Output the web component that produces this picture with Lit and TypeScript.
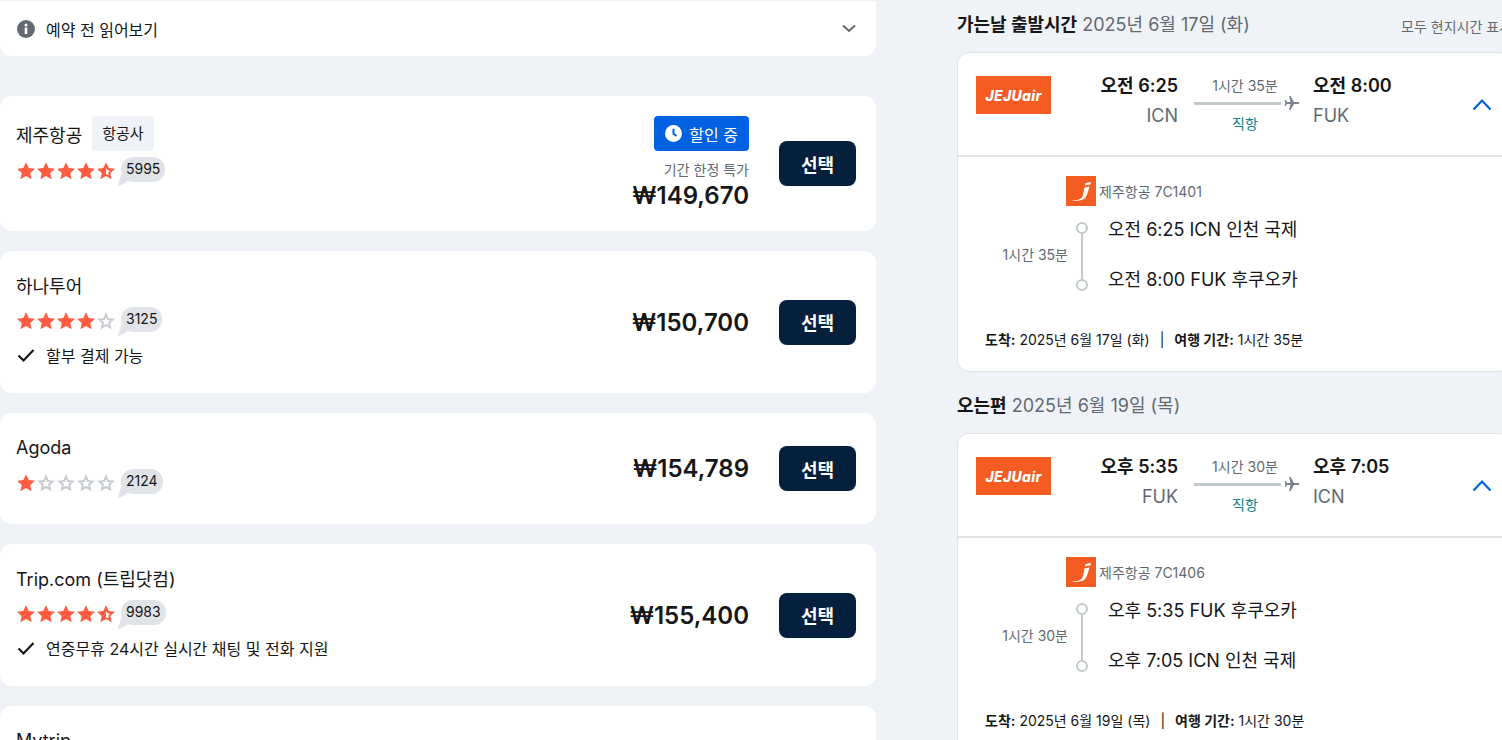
import { html, css, LitElement, svg } from "lit";
import { customElement } from "lit/decorators.js";

interface Offer {
  name: string;
  tag?: string;
  rating?: number;
  count?: string;
  perk?: string;
  price?: string;
  sale?: boolean;
}

interface Stop {
  time: string;
  code: string;
  place: string;
}

interface Leg {
  label: string;
  date: string;
  from: Stop;
  to: Stop;
  duration: string;
  flight: string;
}

const offers: Offer[] = [
  { name: "제주항공", tag: "항공사", rating: 4.5, count: "5995", price: "₩149,670", sale: true },
  { name: "하나투어", rating: 4, count: "3125", perk: "할부 결제 가능", price: "₩150,700" },
  { name: "Agoda", rating: 1, count: "2124", price: "₩154,789" },
  { name: "Trip.com (트립닷컴)", rating: 4.5, count: "9983", perk: "연중무휴 24시간 실시간 채팅 및 전화 지원", price: "₩155,400" },
  { name: "Mytrip" },
];

const legs: Leg[] = [
  {
    label: "가는날 출발시간",
    date: "2025년 6월 17일 (화)",
    from: { time: "오전 6:25", code: "ICN", place: "인천 국제" },
    to: { time: "오전 8:00", code: "FUK", place: "후쿠오카" },
    duration: "1시간 35분",
    flight: "제주항공 7C1401",
  },
  {
    label: "오는편",
    date: "2025년 6월 19일 (목)",
    from: { time: "오후 5:35", code: "FUK", place: "후쿠오카" },
    to: { time: "오후 7:05", code: "ICN", place: "인천 국제" },
    duration: "1시간 30분",
    flight: "제주항공 7C1406",
  },
];

const STAR = "10,1.2 12.7,7 19,7.7 14.3,12 15.6,18.3 10,15.1 4.4,18.3 5.7,12 1,7.7 7.3,7";

function star(fill: number, i: number) {
  if (fill >= 1) {
    return html`<svg class="star" viewBox="0 0 20 20"><polygon points=${STAR} fill="#ff5c41"></polygon></svg>`;
  }
  if (fill > 0) {
    return html`<svg class="star" viewBox="0 0 20 20">
      <clipPath id="half-${i}"><rect width="10" height="20"></rect></clipPath>
      <polygon points=${STAR} fill="#ff5c41"></polygon>
      ${svg`<polygon points="10,7.2 11.6,9.3 14,10 12.2,11.8 12.6,14.3 10,13.2" fill="#fff"></polygon>`}
    </svg>`;
  }
  return html`<svg class="star" viewBox="0 0 20 20">
    <polygon points="10,3.6 11.9,8 16.6,8.5 13.1,11.7 14.1,16.4 10,14 5.9,16.4 6.9,11.7 3.4,8.5 8.1,8" fill="#fff" stroke="#c9cdd2" stroke-width="2"></polygon>
  </svg>`;
}

@customElement("app-root")
export class AppRoot extends LitElement {
  static styles = css`
    :host {
      display: block;
      width: 1502px;
      height: 740px;
      overflow: hidden;
      background: #eff3f8;
      color: #161616;
      font-family: Inter, "Noto Sans CJK KR", sans-serif;
    }

    .page {
      display: flex;
      gap: 81px;
      align-items: flex-start;
    }

    .left {
      flex: none;
      width: 876px;
      padding-top: 1px;
      display: flex;
      flex-direction: column;
      gap: 20px;
    }

    .right {
      flex: none;
      width: 555px;
    }

    .notice {
      display: flex;
      align-items: center;
      height: 55px;
      margin-bottom: 20px;
      padding: 0 20px 0 17px;
      box-sizing: border-box;
      background: #fff;
      border-radius: 0 0 12px 12px;
      font-size: 16px;
    }

    .notice span {
      margin-left: 11px;
      flex: 1;
    }

    .offer {
      display: flex;
      align-items: center;
      padding: 20px;
      padding-left: 16px;
      background: #fff;
      border-radius: 12px;
    }

    .info {
      align-self: flex-start;
      flex: 1;
      padding-bottom: 6px;
    }

    .name-row {
      display: flex;
      align-items: center;
      height: 28px;
      font-size: 18px;
    }

    .name-row.tagged {
      height: 35px;
    }

    .tag {
      margin-left: 10px;
      padding: 0 10px;
      line-height: 35px;
      font-size: 15px;
      background: #eff3f8;
      border-radius: 4px;
    }

    .rating {
      display: flex;
      align-items: flex-start;
      height: 29px;
      margin-top: 8px;
    }

    .tagged + .rating {
      margin-top: 6px;
    }

    .star {
      display: block;
      flex: none;
      width: 20px;
      height: 20px;
      margin-top: 4px;
    }

    .bubble {
      position: relative;
      margin-left: 5px;
      padding: 0 5px;
      height: 25px;
      line-height: 24px;
      font-size: 14px;
      background: #e0e4e9;
      border-radius: 12px;
    }

    .bubble::after {
      content: "";
      position: absolute;
      left: -3px;
      bottom: -4px;
      width: 9px;
      height: 12px;
      background: #e0e4e9;
      clip-path: polygon(40% 0, 100% 50%, 100% 66%, 12% 100%, 0 92%);
    }

    .perk {
      display: flex;
      align-items: center;
      height: 24px;
      margin-top: 7px;
      font-size: 16px;
    }

    .perk svg {
      flex: none;
      width: 20px;
      height: 20px;
      margin-right: 10px;
    }

    .deal {
      display: flex;
      flex-direction: column;
      align-items: flex-end;
    }

    .sale {
      display: flex;
      align-items: center;
      gap: 7px;
      height: 35px;
      padding: 0 11px;
      color: #fff;
      background: #0062e3;
      border-radius: 4px;
      font-size: 16px;
    }

    .sale svg {
      width: 17px;
      height: 17px;
    }

    .note {
      margin-top: 9px;
      font-size: 14px;
      line-height: 20px;
      color: #626971;
    }

    .price {
      font-size: 24px;
      font-weight: 600;
      line-height: 31px;
    }

    .select {
      flex: none;
      width: 77px;
      height: 45px;
      margin-left: 30px;
      padding: 0;
      border: 0;
      border-radius: 8px;
      color: #fff;
      background: #05203c;
      font: 700 18px Inter, "Noto Sans CJK KR", sans-serif;
    }

    .leg-head {
      display: flex;
      justify-content: space-between;
      align-items: flex-end;
      height: 28px;
      margin-bottom: 13px;
      line-height: 28px;
      font-size: 18px;
      white-space: nowrap;
    }

    .leg-head b {
      font-weight: 700;
    }

    .leg-head em {
      font-style: normal;
      color: #626971;
    }

    .leg-head small {
      font-size: 14px;
      color: #626971;
      line-height: 24px;
    }

    .leg {
      margin-bottom: 20px;
      background: #fff;
      border: 1px solid #e0e4e9;
      border-radius: 12px;
    }

    .summary {
      display: flex;
      height: 102px;
      padding: 18px 20px 0 18px;
      box-sizing: border-box;
      border-bottom: 2px solid #e0e4e9;
      height: 104px;
    }

    .wordmark {
      flex: none;
      width: 75px;
      height: 38px;
      margin-top: 5px;
      background: #f45c22;
      color: #fff;
      text-align: center;
      font-size: 14px;
      font-weight: 800;
      font-style: italic;
      line-height: 39px;
      letter-spacing: 0.3px;
    }

    .end {
      flex: none;
      font-size: 18px;
      line-height: 30px;
      color: #626971;
    }

    .end b {
      display: block;
      font-weight: 600;
      color: #161616;
    }

    .end.from {
      width: 127px;
      text-align: right;
    }

    .end.to {
      width: 159px;
      margin-left: 13px;
    }

    .route {
      flex: none;
      width: 106px;
      margin: 5px 0 0 16px;
      font-size: 14px;
      line-height: 20px;
      color: #626971;
    }

    .route div {
      width: 102px;
      text-align: center;
    }

    .route .stops {
      margin-top: 4px;
      color: #0c838a;
    }

    .route .line {
      display: flex;
      align-items: center;
      width: 106px;
      height: 14px;
    }

    .route .line i {
      display: block;
      width: 87px;
      height: 3px;
      margin-right: 3px;
      background: #c2c9cd;
    }

    .route svg {
      width: 16px;
      height: 16px;
    }

    .toggle {
      flex: none;
      width: 20px;
      height: 13px;
      margin-top: 27px;
    }

    .details {
      padding: 19px 0 21px 0;
    }

    .carrier {
      display: flex;
      align-items: center;
      gap: 3px;
      margin-left: 108px;
      font-size: 14px;
      color: #626971;
    }

    .carrier svg {
      width: 30px;
      height: 30px;
    }

    .timeline {
      display: flex;
      height: 74px;
      margin-top: 12px;
    }

    .span {
      width: 110px;
      font-size: 14px;
      color: #626971;
      text-align: right;
      line-height: 74px;
    }

    .rail {
      display: flex;
      flex-direction: column;
      align-items: center;
      width: 12px;
      height: 69px;
      margin: 4px 20px 0 8px;
    }

    .rail i {
      flex: none;
      width: 8px;
      height: 8px;
      border: 2px solid #c2c9cd;
      border-radius: 50%;
    }

    .rail u {
      flex: 1;
      width: 2px;
      background: #c2c9cd;
    }

    .stops-list {
      display: flex;
      flex-direction: column;
      justify-content: space-between;
      font-size: 18px;
      line-height: 24px;
    }

    .footer {
      margin: 38px 0 0 27px;
      font-size: 14px;
      line-height: 20px;
    }

    .footer b {
      font-weight: 700;
    }

    .footer span {
      margin: 0 10px;
    }
  `;

  private renderOffer(o: Offer) {
    const rating = o.rating ?? 0;
    return html`
      <div class="offer">
        <div class="info">
          <div class="name-row ${o.tag ? "tagged" : ""}">
            ${o.name}
            ${o.tag ? html`<span class="tag">${o.tag}</span>` : ""}
          </div>
          ${o.count ? html`
            <div class="rating">
              ${[0, 1, 2, 3, 4].map(i => star(rating - i, i))}
              <div class="bubble">${o.count}</div>
            </div>` : ""}
          ${o.perk ? html`
            <div class="perk">
              <svg viewBox="0 0 20 20"><path d="M2.5 10.5l5 5 10-10.5" fill="none" stroke="#161616" stroke-width="2.2"></path></svg>
              ${o.perk}
            </div>` : ""}
        </div>
        ${o.price ? html`
          <div class="deal">
            ${o.sale ? html`
              <div class="sale">
                <svg viewBox="0 0 17 17">
                  <circle cx="8.5" cy="8.5" r="8.5" fill="#fff"></circle>
                  <path d="M8.5 3.8v5l3 2.2" fill="none" stroke="#0062e3" stroke-width="2"></path>
                </svg>
                할인 중
              </div>
              <div class="note">기간 한정 특가</div>` : ""}
            <div class="price">${o.price}</div>
          </div>
          <button class="select">선택</button>` : ""}
      </div>
    `;
  }

  private renderLeg(l: Leg) {
    return html`
      <div class="leg-head">
        <div><b>${l.label}</b> <em>${l.date}</em></div>
        ${l === legs[0] ? html`<small>모두 현지시간 표시</small>` : ""}
      </div>
      <div class="leg">
        <div class="summary">
          <div class="wordmark">JEJUair</div>
          <div class="end from"><b>${l.from.time}</b>${l.from.code}</div>
          <div class="route">
            <div>${l.duration}</div>
            <span class="line">
              <i></i>
              <svg viewBox="0 0 16 16"><path d="M15.5 8c0-.7-.9-1.1-1.7-1.1H10L6.6 1H5l1.5 5.9H3L1.7 5H.6l.7 3-.7 3h1.1L3 9.1h3.5L5 15h1.6L10 9.1h3.8c.8 0 1.7-.4 1.7-1.1z" fill="#7c8390"></path></svg>
            </span>
            <div class="stops">직항</div>
          </div>
          <div class="end to"><b>${l.to.time}</b>${l.to.code}</div>
          <svg class="toggle" viewBox="0 0 20 13"><path d="M1.5 11.5L10 2.5l8.5 9" fill="none" stroke="#0062e3" stroke-width="2.2"></path></svg>
        </div>
        <div class="details">
          <div class="carrier">
            <svg viewBox="0 0 30 30">
              <rect width="30" height="30" fill="#f45c22"></rect>
              <path d="M19 9.5l.6-2.4c1.500-.4 3.400-.8 5.400-1l-.7 2.500c-1.800.1-3.600.4-5.300.9zM18.400 11.500l5.100-.9c-1 4-2.200 8.300-4 11-1.700 2.400-5.200 3.500-11.500 3.300l-3 .1c3.800-1 8.900-.6 11-3.700 1.200-2 1.800-6.400 2.400-9.800z" fill="#fff"></path>
            </svg>
            ${l.flight}
          </div>
          <div class="timeline">
            <div class="span">${l.duration}</div>
            <div class="rail"><i></i><u></u><i></i></div>
            <div class="stops-list">
              <div>${l.from.time} ${l.from.code} ${l.from.place}</div>
              <div>${l.to.time} ${l.to.code} ${l.to.place}</div>
            </div>
          </div>
          <div class="footer"><b>도착:</b> ${l.date}<span>|</span><b>여행 기간:</b> ${l.duration}</div>
        </div>
      </div>
    `;
  }

  protected render() {
    return html`
      <div class="page">
        <div class="left">
          <div class="notice">
            <svg width="18" height="18" viewBox="0 0 18 18">
              <circle cx="9" cy="9" r="9" fill="#626971"></circle>
              <rect x="7.700" y="7.500" width="2.600" height="6.500" fill="#fff"></rect>
              <circle cx="9" cy="5" r="1.500" fill="#fff"></circle>
            </svg>
            <span>예약 전 읽어보기</span>
            <svg width="14" height="9" viewBox="0 0 14 9"><path d="M1 1.500l6 5.500 6-5.500" fill="none" stroke="#626971" stroke-width="2"></path></svg>
          </div>
          ${offers.map(o => this.renderOffer(o))}
        </div>
        <div class="right">
          <div style="height: 11px"></div>
          ${legs.map(l => this.renderLeg(l))}
        </div>
      </div>
    `;
  }
}
